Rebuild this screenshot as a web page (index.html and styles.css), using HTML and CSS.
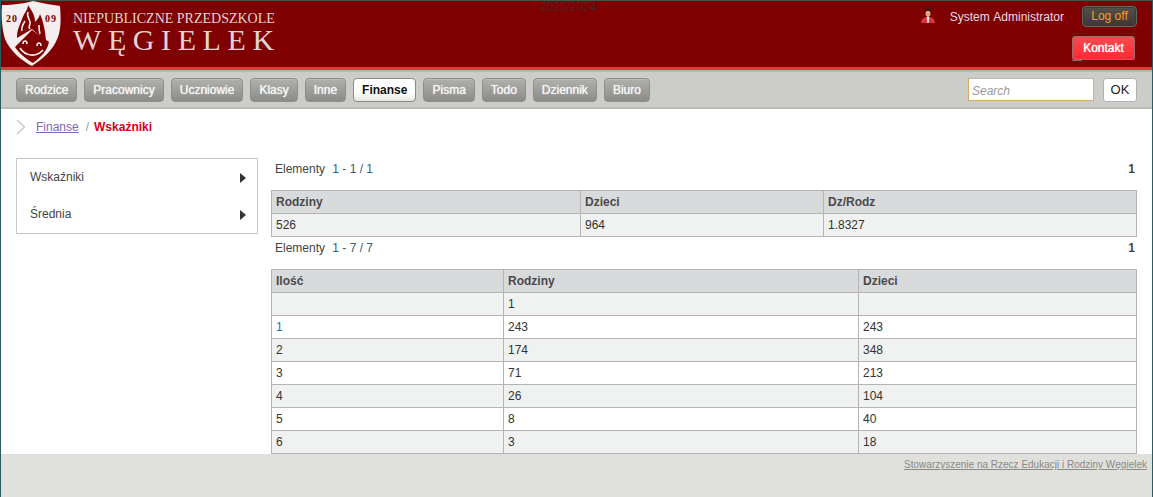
FILE: index.html
```html
<!DOCTYPE html>
<html lang="en">
<head>
  <meta charset="UTF-8">
  <title>Węgielek</title>
  <link rel="stylesheet" href="styles.css">
</head>
<body>
  <div class="page">

    <!-- Header -->
    <div class="header">
      <div class="brand">
        <svg class="crest" viewBox="0 0 60 66" width="60" height="66">
          <path d="M1 4 C13 4 25 2 32 0 C41 2 51 4 59 5 C60 18 60 28 57 36 C52 50 41 58 31 65 C21 60 9 50 4 38 C1 28 0 16 1 4 Z" fill="#f4eeee"/>
          <path d="M16 37 C16 28 19 24 21 18 C23 12 27 9 27 4 C31 10 34 14 34 21 C36 19 38 17 39 13 C42 20 44 28 45 40 L31 28 Z" fill="#7f0000"/>
          <path d="M27 11 C25 16 30 19 29 23 C28 25 28 27 29 28 M21 30 C20 26 22 23 24 20 M38 24 C38 28 38 30 39 33" fill="none" stroke="#f4eeee" stroke-width="1.6"/>
          <path d="M31 29 L48 41 C46 50 40 56 32 62 C25 58 18 52 14 46 Z" fill="#7f0000"/>
          <path d="M19 47 C24 55 35 57 42 49 M22 43 C22 39 26 39 26 43 M36 45 C36 41 40 41 40 45" fill="none" stroke="#f4eeee" stroke-width="1.6"/>
          <text x="5" y="21" class="crest-year">20</text>
          <text x="44" y="21" class="crest-year">09</text>
        </svg>
        <div class="brand-text">
          <div class="brand-sub">NIEPUBLICZNE PRZEDSZKOLE</div>
          <div class="brand-name">WĘGIELEK</div>
        </div>
      </div>
      <div class="school-year">2023/2024</div>
      <div class="header-right">
        <div class="user-row">
          <svg class="user-icon" viewBox="0 0 16 16" width="16" height="16">
            <path d="M5 2 L6 0.5 L10 0.5 L11 2 L10.6 4 L5.4 4 Z" fill="#33211c"/>
            <rect x="5.6" y="3" width="4.8" height="5" rx="1.5" fill="#dfa987"/>
            <rect x="7" y="7" width="2" height="2" fill="#dfa987"/>
            <path d="M1 15 L2 11 L6 9 L10 9 L14 11 L15 15 Z" fill="#d8343c"/>
            <path d="M6.6 9 L9.4 9 L8.6 15 L7.4 15 Z" fill="#f5e8e4"/>
          </svg>
          <span class="user-name">System Administrator</span>
          <a class="logoff" href="#">Log off</a>
        </div>
        <a class="contact" href="#">Kontakt</a>
      </div>
    </div>

    <!-- Main menu -->
    <div class="menu">
      <div class="menu-items">
        <a class="menu-btn" href="#">Rodzice</a>
        <a class="menu-btn" href="#">Pracownicy</a>
        <a class="menu-btn" href="#">Uczniowie</a>
        <a class="menu-btn" href="#">Klasy</a>
        <a class="menu-btn" href="#">Inne</a>
        <a class="menu-btn active" href="#">Finanse</a>
        <a class="menu-btn" href="#">Pisma</a>
        <a class="menu-btn" href="#">Todo</a>
        <a class="menu-btn" href="#">Dziennik</a>
        <a class="menu-btn" href="#">Biuro</a>
      </div>
      <div class="search">
        <input class="search-input" type="text" placeholder="Search">
        <button class="search-btn">OK</button>
      </div>
    </div>

    <!-- Content -->
    <div class="content">
      <div class="crumbs">
        <svg class="crumb-arrow" viewBox="0 0 10 16" width="10" height="16">
          <path d="M1 1 L8.5 8 L1 15" fill="none" stroke="#c4c4c4" stroke-width="1.2"/>
        </svg>
        <a class="crumb-link" href="#">Finanse</a>
        <span class="crumb-sep">/</span>
        <span class="crumb-current">Wskaźniki</span>
      </div>

      <div class="columns">
        <div class="side-menu">
          <a class="side-item" href="#">Wskaźniki<span class="side-arrow"></span></a>
          <a class="side-item" href="#">Średnia<span class="side-arrow"></span></a>
        </div>

        <div class="main">
          <div class="pager">
            <span>Elementy <span class="pager-nums">1 - 1 / 1</span></span>
            <b>1</b>
          </div>
          <table class="grid">
            <colgroup><col class="c1a"><col class="c1b"><col></colgroup>
            <tr><th>Rodziny</th><th>Dzieci</th><th>Dz/Rodz</th></tr>
            <tr class="alt"><td>526</td><td>964</td><td>1.8327</td></tr>
          </table>

          <div class="pager pager-second">
            <span>Elementy <span class="pager-nums">1 - 7 / 7</span></span>
            <b>1</b>
          </div>
          <table class="grid">
            <colgroup><col class="c2a"><col class="c2b"><col></colgroup>
            <tr><th>Ilość</th><th>Rodziny</th><th>Dzieci</th></tr>
            <tr class="alt"><td></td><td>1</td><td></td></tr>
            <tr><td><a href="#">1</a></td><td>243</td><td>243</td></tr>
            <tr class="alt"><td>2</td><td>174</td><td>348</td></tr>
            <tr><td>3</td><td>71</td><td>213</td></tr>
            <tr class="alt"><td>4</td><td>26</td><td>104</td></tr>
            <tr><td>5</td><td>8</td><td>40</td></tr>
            <tr class="alt"><td>6</td><td>3</td><td>18</td></tr>
          </table>
        </div>
      </div>
    </div>

    <!-- Footer -->
    <div class="footer">
      <a href="#">Stowarzyszenie na Rzecz Edukacji i Rodziny Węgielek</a>
    </div>

  </div>
</body>
</html>
```

FILE: styles.css
```css
html, body {
  height: 100%;
}

body {
  margin: 0;
  background: #e0e0dc;
  font-family: "Liberation Sans", Arial, sans-serif;
  font-size: 12px;
  color: #333;
  overflow: hidden;
}

a {
  color: inherit;
}

.page {
  height: 497px;
  box-sizing: border-box;
  border-left: 1px solid #2c5a62;
  border-right: 1px solid #2c5a62;
  border-top: 1px solid #45504f;
  display: flex;
  flex-direction: column;
}

/* Header */
.header {
  height: 66px;
  flex: none;
  background: #7f0000;
  border-bottom: 3px solid #e8343a;
  display: flex;
  justify-content: space-between;
  position: relative;
}

.brand {
  display: flex;
}

.crest {
  display: block;
}

.crest-year {
  font-family: "Liberation Serif", serif;
  font-size: 10px;
  font-weight: bold;
  fill: #7f0000;
  letter-spacing: 1px;
}

.brand-text {
  font-family: "Liberation Serif", serif;
  color: #e2d4d4;
  margin-left: 12px;
  padding-top: 11px;
}

.brand-sub {
  font-size: 14px;
  line-height: 14px;
}

.brand-name {
  font-size: 30px;
  line-height: 28px;
  letter-spacing: 6.6px;
}

.school-year {
  position: absolute;
  left: 539px;
  top: 0;
  color: #4a2424;
  font-size: 12px;
  line-height: 12px;
}

.header-right {
  display: flex;
  flex-direction: column;
  align-items: flex-end;
  padding: 5px 15px 0 0;
}

.user-row {
  display: flex;
  align-items: center;
}

.user-icon {
  margin-right: 14px;
  margin-top: -1px;
}

.user-name {
  color: #e6dce6;
  margin-right: 18px;
  word-spacing: 1px;
}

.logoff {
  width: 53px;
  height: 19px;
  line-height: 18px;
  text-align: center;
  color: #ff9a20;
  text-decoration: none;
  background: linear-gradient(#55504c, #3c3836);
  border: 1px solid #6a6662;
  border-radius: 4px;
  box-shadow: 0 0 0 1px #3c3836 inset;
}

.contact {
  position: relative;
  margin-top: 9px;
  margin-right: 2px;
  width: 61px;
  height: 22px;
  line-height: 22px;
  text-align: center;
  color: #fff;
  text-shadow: 0 0 1px #fff;
  text-decoration: none;
  background: linear-gradient(#f64a50, #ff2a34);
  border: 1px solid #a06a6a;
  border-radius: 3px 3px 2px 2px;
}

/* the little grey tab under the button corner */
.contact::after {
  content: "";
  position: absolute;
  left: -1px;
  bottom: -2px;
  width: 10px;
  height: 1px;
  background: #8a6464;
}

/* Main menu */
.menu {
  height: 39px;
  flex: none;
  box-sizing: border-box;
  background: #cccdc8;
  border-top: 2px solid #b6b6b1;
  border-bottom: 2px solid #bdbdb7;
  display: flex;
  justify-content: space-between;
  align-items: center;
  padding: 0 15px;
}

.menu-items {
  display: flex;
  gap: 7px;
}

.menu-btn {
  height: 22px;
  line-height: 22px;
  padding: 0 8px;
  color: #f4f4f2;
  text-shadow: 0 0 1px #fff;
  text-decoration: none;
  background: linear-gradient(#b0b0ac, #8b8b87);
  border: 1px solid #8e8e8a;
  border-radius: 4px;
  box-shadow: inset 0 1px 0 #bcbcb8;
}

.menu-btn.active {
  color: #111;
  font-weight: bold;
  text-shadow: none;
  background: linear-gradient(#fff 60%, #e6e6e4);
  border-color: #8a8a86;
  box-shadow: none;
}

.search {
  display: flex;
  align-items: center;
  gap: 9px;
}

.search-input {
  width: 118px;
  height: 17px;
  padding: 3px 3px 1px;
  margin: 0;
  font-family: inherit;
  font-size: 12px;
  background: #fff;
  border: 1px solid #b8b8b0;
  border-bottom-color: #d8a868;
  border-left-color: #d8a868;
  outline: none;
}

.search-input::placeholder {
  color: #999;
  font-style: italic;
}

.search-btn {
  width: 34px;
  height: 24px;
  padding: 0;
  font-family: inherit;
  font-size: 13px;
  color: #222;
  background: #fff;
  border: 1px solid #b0b0ac;
  border-radius: 3px;
}

/* Content */
.content {
  height: 345px;
  flex: none;
  background: #fff;
  overflow: hidden;
}

.crumbs {
  display: flex;
  align-items: center;
  height: 36px;
  padding-left: 15px;
}

.crumb-link {
  margin-left: 10px;
  color: #7a68c0;
}

.crumb-sep {
  margin: 0 5px 0 7px;
  color: #999;
}

.crumb-current {
  color: #d4001c;
  font-weight: bold;
}

.columns {
  display: flex;
  padding: 13px 15px 0 15px;
  align-items: flex-start;
}

.side-menu {
  width: 242px;
  box-sizing: border-box;
  border: 1px solid #c8c8c8;
  flex: none;
  padding: 0 0 1px;
}

.side-item {
  display: flex;
  justify-content: space-between;
  align-items: center;
  height: 35px;
  padding: 0 11px 0 13px;
  color: #444;
  text-decoration: none;
}

.side-item + .side-item {
  height: 36px;
  padding-top: 2px;
}

.side-arrow {
  width: 0;
  height: 0;
  margin-top: 2px;
  border-left: 6px solid #333;
  border-top: 5px solid transparent;
  border-bottom: 5px solid transparent;
}

.main {
  flex: 1;
  margin-left: 13px;
  min-width: 0;
}

.pager {
  display: flex;
  justify-content: space-between;
  height: 32px;
  line-height: 23px;
  padding: 0 2px 0 4px;
  color: #444;
}

.pager-second {
  line-height: 22px;
}

.pager-nums {
  margin-left: 4px;
  color: #3d5a78;
}

.grid {
  width: 100%;
  border-collapse: collapse;
  table-layout: fixed;
  color: #333;
}

.c1a { width: 309px; }
.c1b { width: 243px; }
.c2a { width: 232px; }
.c2b { width: 355px; }

.grid th,
.grid td {
  height: 23px;
  padding: 0 4px;
  box-sizing: border-box;
  border: 1px solid #b4b4b4;
  text-align: left;
}

.grid th {
  background: #d9dadc;
  color: #4a4a4a;
}

.grid tr.alt td {
  background: #f0f1f1;
}

.grid a {
  color: #1a6fb0;
  text-decoration: none;
}

/* Footer */
.footer {
  text-align: right;
  padding: 5px 5px 0 0;
  font-size: 10px;
  color: #8a8a86;
}
```
